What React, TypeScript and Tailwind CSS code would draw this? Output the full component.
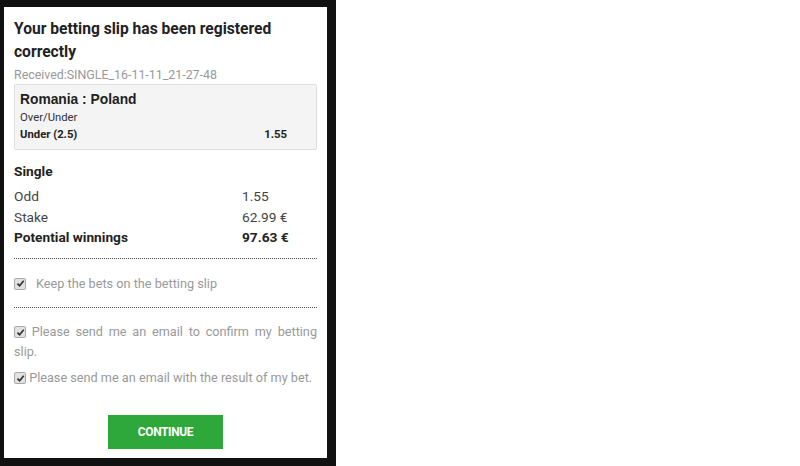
import React from 'react'

function Check() {
  return (
    <span className="inline-flex h-[12px] w-[12px] shrink-0 items-center justify-center rounded-[2px] border border-[#a8a8a8] bg-[#e2e2e2] align-[-1px]">
      <svg viewBox="0 0 10 10" className="h-[9px] w-[9px]">
        <path d="M1.6 5.2 L4 7.6 L8.6 2" fill="none" stroke="#333" strokeWidth="1.9" />
      </svg>
    </span>
  )
}

export default function App() {
  return (
    <div className="h-[466px] w-[800px] bg-white" style={{ fontFamily: 'Roboto, "Liberation Sans", sans-serif' }}>
      <div className="h-[466px] w-[336px] bg-[#111111] pl-[4px] pt-[7px]">
        <div className="h-[451px] w-[323px] bg-white px-[10px] pt-[11px]">
          <h1 className="text-[15.6px] font-bold leading-[23px] text-[#222]">
            Your betting slip has been registered correctly
          </h1>
          <p className="mt-[4px] text-[12.4px] leading-[14px] text-[#999]">Received:SINGLE_16-11-11_21-27-48</p>

          <div className="mt-[2px] w-[303px] rounded-[2px] border border-[#dedede] bg-[#f4f4f4] px-[5px] pt-[6px] pb-[5px]">
            <div className="text-[13.8px] font-bold leading-[18px] text-[#222]" style={{ fontFamily: '"Liberation Sans", Arial, sans-serif' }}>
              Romania : Poland
            </div>
            <div className="mt-[1px] text-[11.3px] leading-[16px] text-[#333]">Over/Under</div>
            <div className="flex w-[267px] justify-between text-[11.3px] font-bold leading-[18px] text-[#222]">
              <span>Under (2.5)</span>
              <span>1.55</span>
            </div>
          </div>

          <div className="mt-[12px] text-[13.7px] font-bold leading-[18px] text-[#222]">Single</div>
          <div className="mt-[6px] grid grid-cols-[228px_1fr] text-[13.7px] leading-[20.5px] text-[#444]">
            <span>Odd</span>
            <span>1.55</span>
            <span>Stake</span>
            <span>62.99 €</span>
            <span className="font-bold text-[#222]">Potential winnings</span>
            <span className="font-bold text-[#222]">97.63 €</span>
          </div>

          <div className="mt-[10px] w-[303px] border-t border-dotted border-[#555]" />

          <label className="mt-[17px] flex items-center gap-[10px] text-[12.7px] leading-[16px] text-[#999]">
            <Check />
            <span>Keep the bets on the betting slip</span>
          </label>

          <div className="mt-[15px] w-[303px] border-t border-dotted border-[#555]" />

          <p className="mt-[14px] w-[303px] text-justify text-[12.7px] leading-[20px] text-[#999]">
            <Check /> Please send me an email to confirm my betting slip.
          </p>
          <p className="mt-[6px] w-[303px] text-[12.7px] leading-[20px] text-[#999]">
            <Check /> Please send me an email with the result of my bet.
          </p>

          <div className="mt-[27px] flex justify-center">
            <button className="h-[34px] w-[115px] bg-[#2ea83a] text-[12px] font-bold tracking-[-0.4px] text-white">
              CONTINUE
            </button>
          </div>
        </div>
      </div>
    </div>
  )
}
